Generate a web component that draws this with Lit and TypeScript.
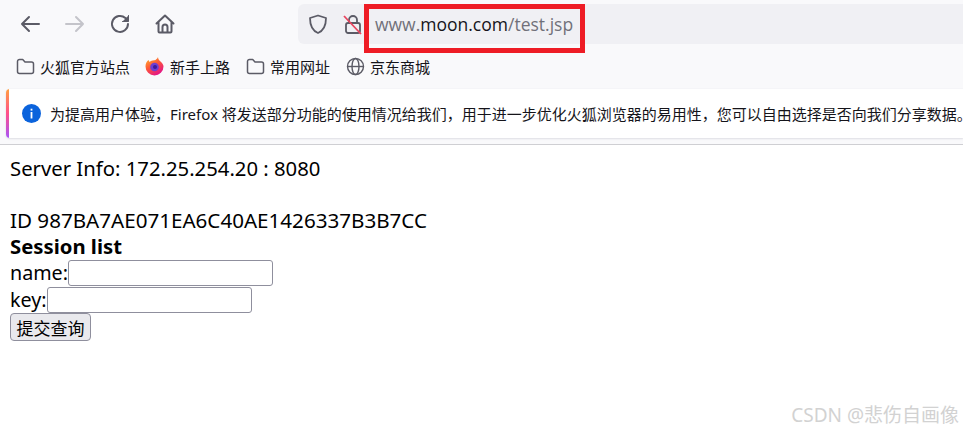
import { LitElement, html, css } from "lit";
import { customElement } from "lit/decorators.js";

@customElement("app-root")
export class AppRoot extends LitElement {
  static styles = css`
    :host { display: block; position: relative; width: 963px; height: 431px; overflow: hidden; background: #fff; font-family: "Noto Sans", "Noto Sans CJK SC", sans-serif; color: #000; }
    .chrome { background: #f9f9fb; height: 144px; border-bottom: 1px solid #cfcfd3; box-sizing: content-box; display: flex; flex-direction: column; }
    .toolbar { height: 44px; display: flex; align-items: flex-start; flex: none; }
    .navs { display: flex; width: 298px; padding: 13px 0 0 19px; box-sizing: border-box; gap: 23px; flex: none; }
    .navs svg { width: 22px; height: 22px; display: block; fill: none; stroke: #5b5b66; stroke-width: 2; stroke-linecap: round; stroke-linejoin: round; }
    .navs svg.dim { stroke: #c4c4ca; }
    .urlbar { flex: 1; height: 40px; margin-top: 4px; background: #f0f0f4; border-radius: 6px 0 0 6px; display: flex; align-items: center; padding-left: 10px; }
    .urlbar svg { width: 20px; height: 22px; flex: none; fill: none; stroke: #5b5b66; stroke-width: 1.8; stroke-linejoin: round; }
    .urlbar svg + svg { margin-left: 15px; }
    .url { margin-left: 12px; font-size: 17.5px; color: #70707a; white-space: nowrap; font-family: "Open Sans", sans-serif; }
    .url b { font-weight: 400; color: #15141a; }
    .bookmarks { height: 44px; display: flex; align-items: center; padding: 0 0 0 16px; box-sizing: border-box; font-size: 15px; color: #15141a; flex: none; }
    .bm { display: flex; align-items: center; gap: 5px; margin-right: 16px; white-space: nowrap; }
    .bm:first-child { margin-right: 15px; }
    .bm.fx { gap: 6px; }
    .bm svg { width: 19px; height: 19px; flex: none; display: block; }
    .notice { margin: 1px 0 0 6px; height: 49px; background: #fff; border-radius: 4px 0 0 4px; box-shadow: 0 1px 2px #dfdfe4, 0 0 1px #dfdfe4; display: flex; align-items: center; font-size: 15px; color: #15141a; white-space: nowrap; overflow: hidden; position: relative; padding-left: 16px; }
    .notice::before { content: ""; position: absolute; left: 0; top: 0; bottom: 0; width: 3px; background: linear-gradient(#ff9f40, #ff4f8b 50%, #a855f7); }
    .notice svg { width: 19px; height: 19px; flex: none; margin-right: 9px; }
    .page { padding: 10px 10px 0; font-size: 20px; line-height: 27px; }
    .server { font-size: 20.3px; }
    .id { font-size: 20.6px; }
    .gap { height: 25px; }
    .row { display: flex; align-items: center; height: 27px; font-size: 19.7px; }
    .page input { width: 205px; height: 26px; box-sizing: border-box; border: 1px solid #8f8f9d; border-radius: 3px; background: #fff; margin: 0; padding: 0; }
    .page button { display: block; width: 81px; height: 28px; padding: 0; box-sizing: border-box; margin-top: 0; font: 17px/1 "Noto Sans CJK SC", sans-serif; color: #000; background: #e9e9ed; border: 1px solid #8f8f9d; border-radius: 4px; }
    .page strong { font-weight: 700; display: block; height: 25px; line-height: 25px; font-size: 20.3px; }
    .mark { position: absolute; left: 364px; top: 4px; width: 221px; height: 49px; box-sizing: border-box; border: 5px solid #ee1c25; }
    .wm { position: absolute; right: 4px; top: 400px; font-size: 19px; color: #d2d2d2; white-space: nowrap; }
  `;

  private folder() {
    return html`<svg viewBox="0 0 19 19" fill="none" stroke="#5b5b66" stroke-width="1.5" stroke-linejoin="round"><path d="M1.500 4.500a2 2 0 0 1 2-2h3.200l2.300 2.500h6.500a2 2 0 0 1 2 2v7.500a2 2 0 0 1-2 2h-12a2 2 0 0 1-2-2z"/></svg>`;
  }

  render() {
    return html`
      <div class="chrome">
        <div class="toolbar">
          <div class="navs">
            <svg viewBox="0 0 22 22"><path d="M20 11H3M10 4l-7 7 7 7"/></svg>
            <svg class="dim" viewBox="0 0 22 22"><path d="M2 11h17M12 4l7 7-7 7"/></svg>
            <svg viewBox="0 0 22 22"><path d="M19 11a8 8 0 1 1-2.600-6L19 7.500"/><path d="M19.500 2.500v6h-6" fill="#5b5b66" stroke-width="1"/></svg>
            <svg viewBox="0 0 22 22"><path d="M2.500 10.500 11 2.500l8.500 8M4.500 9v9.500a1 1 0 0 0 1 1h11a1 1 0 0 0 1-1V9M8.500 19.500V14a2.500 2.500 0 0 1 5 0v5.500"/></svg>
          </div>
          <div class="urlbar">
            <svg viewBox="0 0 20 22"><path d="M10 2.500 18 5c0 8-2 12.500-8 15C4 17.500 2 13 2 5z"/></svg>
            <svg viewBox="0 0 20 22"><path d="M6 10V7a4 4 0 0 1 8 0v3"/><rect x="3" y="10" width="14" height="10" rx="2"/><path d="M1 3l17 18" stroke="#e8455f"/></svg>
            <span class="url">www.<b>moon.com</b>/test.jsp</span>
          </div>
        </div>
        <div class="bookmarks">
          <span class="bm">${this.folder()}火狐官方站点</span>
          <span class="bm fx">
            <svg viewBox="0 0 19 19"><defs><linearGradient id="fx" x1="0" y1="0" x2="0.6" y2="1"><stop offset="0" stop-color="#ffbd2e"/><stop offset="0.5" stop-color="#ff5a36"/><stop offset="1" stop-color="#e31587"/></linearGradient></defs><path d="M9.500 18.500a9 9 0 0 1-9-9c0-3 1-5 3-6.500l1 2C6 3 9 3.500 10.500 3c1-1 2-1.500 2.500-3 0 2 1 3 2.500 4.500 2.500 2 3 4 3 5a9 9 0 0 1-9 9z" fill="url(#fx)"/><circle cx="9.500" cy="10" r="4.300" fill="#6e3fd1"/><circle cx="10" cy="10" r="2" fill="#3b1b9e"/></svg>
            新手上路
          </span>
          <span class="bm">${this.folder()}常用网址</span>
          <span class="bm"><svg viewBox="0 0 19 19" fill="none" stroke="#5b5b66" stroke-width="1.400"><circle cx="9.500" cy="9.500" r="8"/><ellipse cx="9.500" cy="9.500" rx="3.500" ry="8"/><path d="M1.500 9.500h16"/></svg>京东商城</span>
        </div>
        <div class="notice">
          <svg viewBox="0 0 19 19"><circle cx="9.500" cy="9.500" r="9.500" fill="#0b63dc"/><rect x="8.600" y="8" width="1.800" height="6.500" fill="#fff"/><rect x="8.600" y="4.700" width="1.800" height="1.900" fill="#fff"/></svg>
          为提高用户体验，Firefox 将发送部分功能的使用情况给我们，用于进一步优化火狐浏览器的易用性，您可以自由选择是否向我们分享数据。
        </div>
      </div>
      <div class="page">
        <div class="server">Server Info: 172.25.254.20 : 8080</div>
        <div class="gap"></div>
        <div class="id">ID 987BA7AE071EA6C40AE1426337B3B7CC</div>
        <strong>Session list</strong>
        <div class="row">name:<input /></div>
        <div class="row">key:<input /></div>
        <button>提交查询</button>
      </div>
      <div class="mark"></div>
      <div class="wm">CSDN @悲伤自画像</div>
    `;
  }
}
